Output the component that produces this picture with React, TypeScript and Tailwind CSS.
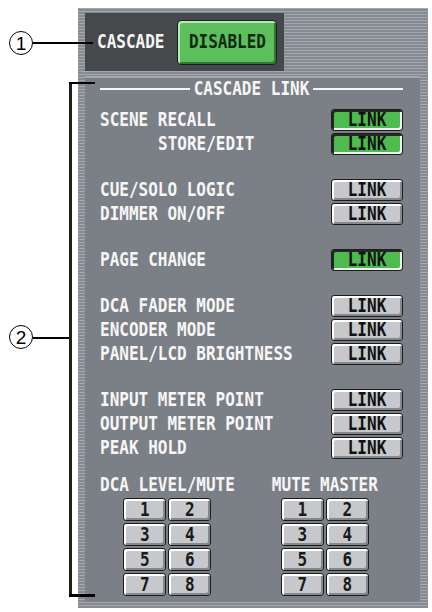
import React from 'react';

type LinkRow = { label: string; on?: boolean; indent?: boolean };

const groups: LinkRow[][] = [
  [
    { label: 'SCENE RECALL', on: true },
    { label: 'STORE/EDIT', on: true, indent: true },
  ],
  [{ label: 'CUE/SOLO LOGIC' }, { label: 'DIMMER ON/OFF' }],
  [{ label: 'PAGE CHANGE', on: true }],
  [{ label: 'DCA FADER MODE' }, { label: 'ENCODER MODE' }, { label: 'PANEL/LCD BRIGHTNESS' }],
  [{ label: 'INPUT METER POINT' }, { label: 'OUTPUT METER POINT' }, { label: 'PEAK HOLD' }],
];

function Caps({ children, className = '' }: { children: React.ReactNode; className?: string }) {
  return (
    <span className={`inline-block scale-y-[1.18] whitespace-pre leading-none font-bold ${className}`}>
      {children}
    </span>
  );
}

function LinkButton({ on }: { on?: boolean }) {
  const look = on
    ? 'bg-[#4dbb4d] shadow-[inset_2px_2px_0_#262626,inset_-2px_-2px_0_#f2f2f2]'
    : 'bg-[#c6c8cb] shadow-[inset_2px_2px_0_#ffffff,inset_-2px_-2px_0_#85888c]';
  return (
    <div
      className={`w-[72px] h-[22px] rounded-[3px] border border-[#1c1c1c] flex items-center justify-center ${look}`}
    >
      <Caps className="text-[#111] text-[16px]">LINK</Caps>
    </div>
  );
}

function NumberGrid() {
  return (
    <div className="grid grid-cols-2 gap-[2px]">
      {[1, 2, 3, 4, 5, 6, 7, 8].map((n) => (
        <div
          key={n}
          className="w-[43px] h-[23px] rounded-[3px] border border-[#1c1c1c] bg-[#c6c8cb] shadow-[inset_2px_2px_0_#ffffff,inset_-2px_-2px_0_#85888c] flex items-center justify-center"
        >
          <Caps className="text-[#1a1a1a] text-[16px]">{n}</Caps>
        </div>
      ))}
    </div>
  );
}

export default function App() {
  return (
    <div className="relative w-[432px] h-[612px] bg-white overflow-hidden font-['DejaVu_Sans_Mono','Liberation_Mono',monospace] text-[16px]">
      <div className="pl-[78px] pt-[8px]">
        <div className="w-[350px] h-[600px] pl-[7px] pr-[8px] pt-[5px] bg-[repeating-linear-gradient(180deg,#a3a8ad_0px,#a3a8ad_1px,#868b91_1px,#868b91_3px)]">
          {/* cascade on/off */}
          <div className="w-[199px] h-[58px] bg-[#46494c] flex items-center pl-[12px] gap-[13px]">
            <Caps className="text-[#f6f6f6]">CASCADE</Caps>
            <div className="w-[100px] h-[45px] rounded-[4px] border border-[#1c1c1c] bg-[#5cbf5c] shadow-[inset_2px_2px_0_#b8e8b8,inset_-2px_-2px_0_#2f7a2f] flex items-center justify-center">
              <Caps className="text-[#0f2a0f]">DISABLED</Caps>
            </div>
          </div>

          {/* cascade link panel */}
          <div className="mt-[5px] w-[335px] h-[526px] bg-[#7b8087] border-t-2 border-[#a5a9ae] pl-[15px] pr-[17px] pt-[1px]">
            <div className="h-[20px] flex items-center gap-[4px]">
              <div className="flex-1 h-[2px] bg-[#f6f6f6]" />
              <Caps className="text-[#f6f6f6]">CASCADE LINK</Caps>
              <div className="flex-1 h-[2px] bg-[#f6f6f6]" />
            </div>

            <div className="mt-[9px] flex flex-col gap-[22px]">
              {groups.map((group, gi) => (
                <div key={gi} className="flex flex-col">
                  {group.map((row) => (
                    <div key={row.label} className="h-[24px] flex items-center justify-between">
                      <Caps className={`text-[#f6f6f6] ${row.indent ? 'ml-[58px]' : ''}`}>{row.label}</Caps>
                      <LinkButton on={row.on} />
                    </div>
                  ))}
                </div>
              ))}
            </div>

            <div className="mt-[13px] flex gap-[37px]">
              <div className="flex flex-col items-center">
                <div className="h-[24px] flex items-center">
                  <Caps className="text-[#f6f6f6]">DCA LEVEL/MUTE</Caps>
                </div>
                <div className="mt-[1px]">
                  <NumberGrid />
                </div>
              </div>
              <div className="flex flex-col items-center">
                <div className="h-[24px] flex items-center">
                  <Caps className="text-[#f6f6f6]">MUTE MASTER</Caps>
                </div>
                <div className="mt-[1px]">
                  <NumberGrid />
                </div>
              </div>
            </div>
          </div>
        </div>
      </div>

      {/* callout 1 */}
      <div className="absolute left-[9px] top-[31px] w-[24px] h-[24px] rounded-full border border-black flex items-center justify-center font-['Liberation_Sans',sans-serif] text-[19px] leading-none text-black">
        1
      </div>
      <div className="absolute left-[33px] top-[42px] w-[60px] h-[2px] bg-black" />

      {/* callout 2 with bracket */}
      <div className="absolute left-[9px] top-[325px] w-[24px] h-[24px] rounded-full border border-black flex items-center justify-center font-['Liberation_Sans',sans-serif] text-[19px] leading-none text-black">
        2
      </div>
      <div className="absolute left-[33px] top-[337px] w-[37px] h-[2px] bg-black" />
      <div className="absolute left-[69px] top-[82px] w-[3px] h-[515px] bg-[#221e1a]" />
      <div className="absolute left-[69px] top-[82px] w-[26px] h-[2px] bg-black" />
      <div className="absolute left-[69px] top-[594px] w-[26px] h-[3px] bg-black" />
    </div>
  );
}
